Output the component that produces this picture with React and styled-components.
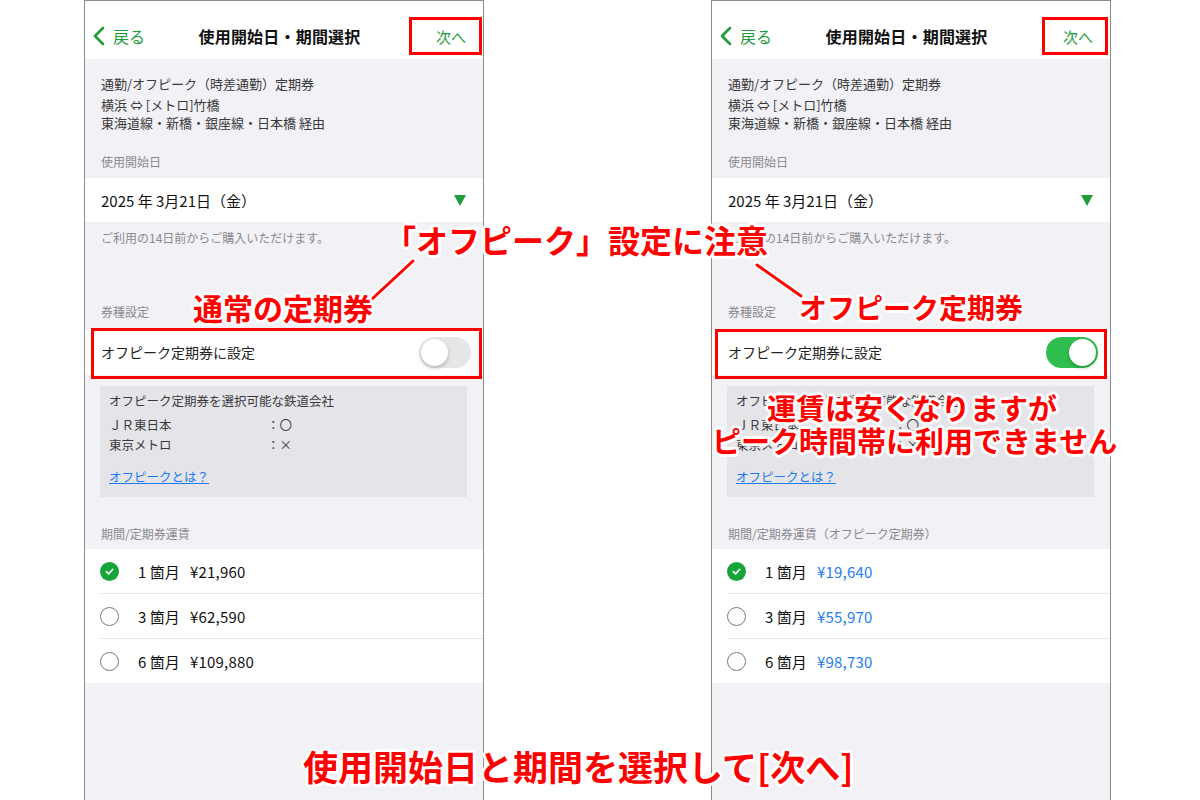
import React from 'react'
import styled, {createGlobalStyle} from 'styled-components'

const GlobalStyle = createGlobalStyle`
  html, body {
    margin: 0;
    padding: 0;
    background: #fff;
  }
  body {
    font-family: "Noto Sans CJK JP", "Noto Sans", sans-serif;
    -webkit-font-smoothing: antialiased;
  }
`

const GREEN = '#1f9d3a'

const Page = styled.div`
  position: relative;
  width: 1200px;
  height: 800px;
  overflow: hidden;
  background: #fff;
`

const Screens = styled.div`
  display: flex;
  gap: 227px;
  padding-left: 84px;
  height: 100%;
`

const Phone = styled.div`
  width: 398px;
  height: 100%;
  border: 1px solid #8c8c8c;
  border-bottom: none;
  background: #f1f1f6;
  display: flex;
  flex-direction: column;
`

const Header = styled.div`
  height: 58px;
  box-sizing: border-box;
  padding: 12px 17px 0 8px;
  background: #fff;
  display: grid;
  grid-template-columns: 1fr auto 1fr;
  align-items: center;
`

const Back = styled.div`
  display: flex;
  align-items: center;
  gap: 8px;
  color: ${GREEN};
  font-size: 16px;
`

const Title = styled.div`
  font-size: 16px;
  font-weight: 700;
  color: #111;
  letter-spacing: 0.2px;
`

const Next = styled.div`
  justify-self: end;
  color: ${GREEN};
  font-size: 15px;
`

const Info = styled.div`
  padding: 16px 16px 0;
  font-size: 13px;
  color: #3a3a3a;
  line-height: 18px;
  p {
    margin: 0;
    &:first-child {
      margin-bottom: 3px;
    }
  }
`

const SectionLabel = styled.div`
  margin: ${p => p.$top}px 16px ${p => p.$bottom ?? 0}px;
  font-size: 12px;
  line-height: 18px;
  color: #8a8a8e;
`

const DateRow = styled.div`
  height: 44px;
  background: #fff;
  display: flex;
  align-items: center;
  justify-content: space-between;
  padding: 0 16px 0 16px;
  font-size: 15px;
  color: #111;
`

const Triangle = styled.span`
  width: 0;
  height: 0;
  border-left: 6px solid transparent;
  border-right: 6px solid transparent;
  border-top: 11px solid ${GREEN};
  margin-right: 1px;
`

const ToggleRow = styled.div`
  height: 46px;
  background: #fff;
  display: flex;
  align-items: center;
  justify-content: space-between;
  padding: 0 12px 0 16px;
  font-size: 14px;
  color: #222;
`

const Switch = styled.div`
  position: relative;
  width: 52px;
  height: 31px;
  border-radius: 16px;
  background: ${p => (p.$on ? '#2fbf4f' : '#e6e6e9')};
  &::after {
    content: '';
    position: absolute;
    top: 2px;
    left: ${p => (p.$on ? '23px' : '2px')};
    width: 27px;
    height: 27px;
    border-radius: 50%;
    background: #fff;
    box-shadow: 0 2px 4px rgba(0, 0, 0, 0.22);
  }
`

const Notice = styled.div`
  margin: 11px 16px 0 15px;
  padding: 6px 9px 10px;
  background: #e4e4e9;
  font-size: 12.5px;
  color: #3a3a3a;
  line-height: 20px;
`

const NoticeTitle = styled.div`
  line-height: 18px;
  margin-bottom: 5px;
`

const Company = styled.div`
  display: flex;
  span:first-child {
    width: 158px;
  }
`

const Link = styled.a`
  display: inline-block;
  margin-top: 13px;
  line-height: 18px;
  color: #1d7cf2;
  text-decoration: underline;
`

const List = styled.div`
  background: #fff;
`

const Row = styled.div`
  height: 44px;
  display: flex;
  align-items: center;
  margin-left: 15px;
  border-top: ${p => (p.$first ? 'none' : '1px solid #e6e6ea')};
  font-size: 15px;
  color: #111;
`

const Radio = styled.span`
  width: 19px;
  height: 19px;
  box-sizing: border-box;
  border-radius: 50%;
  border: ${p => (p.$checked ? 'none' : '1.3px solid #7a7a7a')};
  background: ${p => (p.$checked ? '#17a539' : '#fff')};
  display: flex;
  align-items: center;
  justify-content: center;
  margin-right: 19px;
`

const Months = styled.span`
  width: 52px;
`

const Price = styled.span`
  color: ${p => p.$color};
  letter-spacing: 0.2px;
`

const Overlay = styled.svg`
  position: absolute;
  left: 0;
  top: 0;
  pointer-events: none;
`

const RedBox = styled.div`
  position: absolute;
  box-sizing: border-box;
  border: 3px solid #f00;
`

const Note = styled.div`
  position: absolute;
  font-weight: 700;
  color: #f00;
  line-height: 1.15;
  white-space: nowrap;
  font-size: ${p => p.$size}px;
  text-align: center;
  text-shadow: 2px 0 0 #fff, -2px 0 0 #fff, 0 2px 0 #fff, 0 -2px 0 #fff,
    2px 2px 0 #fff, -2px -2px 0 #fff, 2px -2px 0 #fff, -2px 2px 0 #fff,
    3px 0 1px #fff, -3px 0 1px #fff, 0 3px 1px #fff, 0 -3px 1px #fff;
`

const prices = {
  normal: ['¥21,960', '¥62,590', '¥109,880'],
  off: ['¥19,640', '¥55,970', '¥98,730']
}

function Check() {
  return (
    <svg width="11" height="11" viewBox="0 0 12 12">
      <path d="M2.5 6.2 L5 8.6 L9.6 3.6" fill="none" stroke="#fff" strokeWidth="1.7" strokeLinecap="round" strokeLinejoin="round"/>
    </svg>
  )
}

function Screen({on}) {
  const list = on ? prices.off : prices.normal
  return (
    <Phone>
      <Header>
        <Back>
          <svg width="12" height="20" viewBox="0 0 12 20">
            <path d="M10 2 L2 10 L10 18" fill="none" stroke={GREEN} strokeWidth="2.6" strokeLinecap="round" strokeLinejoin="round"/>
          </svg>
          戻る
        </Back>
        <Title>使用開始日・期間選択</Title>
        <Next>次へ</Next>
      </Header>
      <Info>
        <p>通勤/オフピーク（時差通勤）定期券</p>
        <p>横浜 ⇔ [メトロ]竹橋</p>
        <p>東海道線・新橋・銀座線・日本橋 経由</p>
      </Info>
      <SectionLabel $top={21} $bottom={7}>使用開始日</SectionLabel>
      <DateRow>
        <span>2025 年 3月21日（金）</span>
        <Triangle/>
      </DateRow>
      <SectionLabel $top={7}>ご利用の14日前からご購入いただけます。</SectionLabel>
      <SectionLabel $top={56} $bottom={8}>券種設定</SectionLabel>
      <ToggleRow>
        <span>オフピーク定期券に設定</span>
        <Switch $on={on}/>
      </ToggleRow>
      <Notice>
        <NoticeTitle>オフピーク定期券を選択可能な鉄道会社</NoticeTitle>
        <Company><span>ＪＲ東日本</span><span>：〇</span></Company>
        <Company><span>東京メトロ</span><span>：×</span></Company>
        <Link>オフピークとは？</Link>
      </Notice>
      <SectionLabel $top={28} $bottom={6}>
        {on ? '期間/定期券運賃（オフピーク定期券）' : '期間/定期券運賃'}
      </SectionLabel>
      <List>
        {['1', '3', '6'].map((m, i) => (
          <Row key={m} $first={i === 0}>
            <Radio $checked={i === 0}>{i === 0 && <Check/>}</Radio>
            <Months>{m} 箇月</Months>
            <Price $color={on ? '#1d7cf2' : '#111'}>{list[i]}</Price>
          </Row>
        ))}
      </List>
    </Phone>
  )
}

export default function App() {
  return (
    <Page>
      <GlobalStyle/>
      <Screens>
        <Screen on={false}/>
        <Screen on={true}/>
      </Screens>

      <RedBox style={{left: 409, top: 17, width: 73, height: 38}}/>
      <RedBox style={{left: 1042, top: 17, width: 66, height: 38}}/>
      <RedBox style={{left: 91, top: 328, width: 391, height: 51}}/>
      <RedBox style={{left: 715, top: 329, width: 392, height: 50}}/>

      <Overlay width="1200" height="800">
        <g strokeLinecap="round">
          <line x1="413" y1="261" x2="372" y2="299" stroke="#fff" strokeWidth="7"/>
          <line x1="413" y1="261" x2="372" y2="299" stroke="#f00" strokeWidth="3"/>
          <line x1="757" y1="265" x2="801" y2="296" stroke="#fff" strokeWidth="7"/>
          <line x1="757" y1="265" x2="801" y2="296" stroke="#f00" strokeWidth="3"/>
        </g>
      </Overlay>

      <Note $size={32} style={{left: 384, top: 221}}>「オフピーク」設定に注意</Note>
      <Note $size={30} style={{left: 193, top: 290}}>通常の定期券</Note>
      <Note $size={28} style={{left: 799, top: 291}}>オフピーク定期券</Note>
      <Note $size={29} style={{left: 712, top: 391, width: 400}}>
        運賃は安くなりますが<br/>ピーク時間帯に利用できません
      </Note>
      <Note $size={35} style={{left: 303, top: 746}}>使用開始日と期間を選択して[次へ]</Note>
    </Page>
  )
}
